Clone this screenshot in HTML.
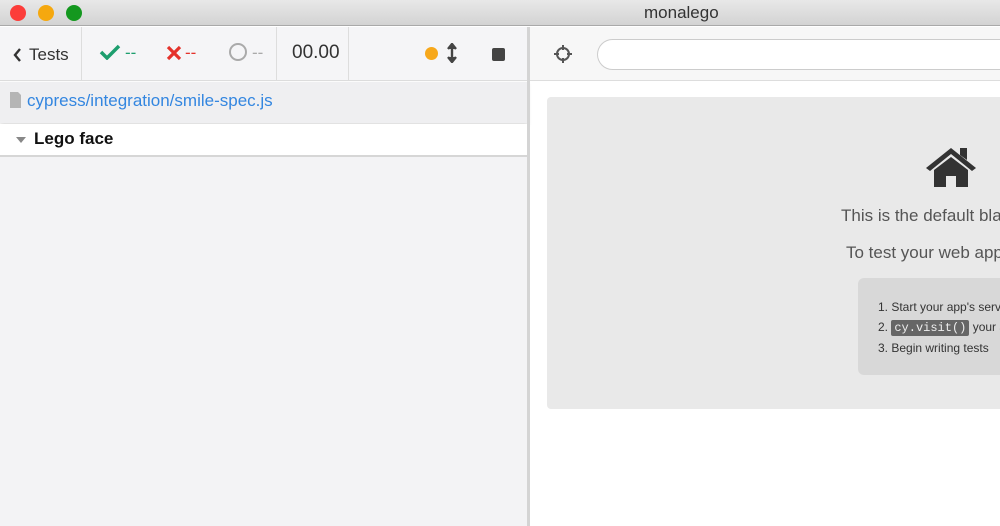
<!DOCTYPE html>
<html><head><meta charset="utf-8"><style>
*{margin:0;padding:0;box-sizing:border-box}
html,body{width:1000px;height:526px;overflow:hidden}
body{font-family:"Liberation Sans",sans-serif;background:#fff}
#w{position:relative;width:1000px;height:526px;overflow:hidden}
.abs{position:absolute}
</style></head><body><div id="w">
<div class="abs" style="left:0;top:0;width:1000px;height:26px;background:linear-gradient(#e8e8e8,#d3d3d3);border-bottom:1px solid #a9a9a9"></div>
<div class="abs" style="left:10px;top:5px;width:16px;height:16px;border-radius:50%;background:#fc3d3a"></div>
<div class="abs" style="left:38px;top:5px;width:16px;height:16px;border-radius:50%;background:#f5a80f"></div>
<div class="abs" style="left:66px;top:5px;width:16px;height:16px;border-radius:50%;background:#14981f"></div>
<div class="abs" style="left:644px;top:3px;font-size:17px;color:#333">monalego</div>

<div class="abs" style="left:0;top:27px;width:528px;height:54px;background:#f5f5f7;border-bottom:1px solid #ddd"></div>
<div class="abs" style="left:81px;top:27px;width:1px;height:54px;background:#ddd"></div>
<div class="abs" style="left:276px;top:27px;width:1px;height:54px;background:#ddd"></div>
<div class="abs" style="left:348px;top:27px;width:1px;height:54px;background:#ddd"></div>
<svg class="abs" style="left:12px;top:47px" width="10" height="16"><path d="M8 2 L3 8 L8 14" stroke="#333" stroke-width="2.4" fill="none"/></svg>
<div class="abs" style="left:29px;top:45px;font-size:17px;color:#333">Tests</div>
<svg class="abs" style="left:99px;top:44px" width="22" height="16"><path d="M2 8 L8 14 L20 2" stroke="#1d9e6e" stroke-width="3.5" fill="none"/></svg>
<div class="abs" style="left:125px;top:43px;font-size:17px;color:#1d9e6e">--</div>
<svg class="abs" style="left:166px;top:45px" width="16" height="16"><path d="M2 2L14 14M14 2L2 14" stroke="#e4322b" stroke-width="3.2"/></svg>
<div class="abs" style="left:185px;top:43px;font-size:17px;color:#e4322b">--</div>
<div class="abs" style="left:229px;top:43px;width:18px;height:18px;border-radius:50%;border:2.5px solid #aaa"></div>
<div class="abs" style="left:252px;top:43px;font-size:17px;color:#aaa">--</div>
<div class="abs" style="left:292px;top:42px;font-size:19px;color:#333">00.00</div>
<div class="abs" style="left:425px;top:47px;width:13px;height:13px;border-radius:50%;background:#f7a81b"></div>
<svg class="abs" style="left:446px;top:43px" width="12" height="20"><path d="M6 2V18M2 6L6 1L10 6M2 14L6 19L10 14" stroke="#444" stroke-width="2.4" fill="#444"/></svg>
<div class="abs" style="left:492px;top:48px;width:13px;height:13px;border-radius:2px;background:#444"></div>

<div class="abs" style="left:0;top:82px;width:528px;height:41px;background:#efeff1;box-shadow:0 2px 4px rgba(0,0,0,.15)"></div>
<svg class="abs" style="left:10px;top:92px" width="12" height="16"><path d="M0 0H8L11 3V16H0Z" fill="#b5b5b5"/></svg>
<div class="abs" style="left:27px;top:91px;font-size:17px;color:#3386e0">cypress/integration/smile-spec.js</div>
<div class="abs" style="left:0;top:124px;width:528px;height:33px;background:#fff;border-bottom:2px solid #d6d6d6"></div>
<div class="abs" style="left:16px;top:137px;width:0;height:0;border-left:5px solid transparent;border-right:5px solid transparent;border-top:6px solid #888"></div>
<div class="abs" style="left:34px;top:129px;font-size:17px;color:#111;font-weight:bold">Lego face</div>
<div class="abs" style="left:0;top:157px;width:528px;height:369px;background:#f3f3f5"></div>
<div class="abs" style="left:527px;top:27px;width:3px;height:499px;background:#d4d4d4"></div>

<div class="abs" style="left:530px;top:27px;width:470px;height:54px;background:#f7f7f7;border-bottom:1px solid #ddd"></div>
<svg class="abs" style="left:553px;top:44px" width="20" height="20"><circle cx="10" cy="10" r="6" stroke="#555" stroke-width="2" fill="none"/><path d="M10 1V6M10 14V19M1 10H6M14 10H19" stroke="#555" stroke-width="2"/></svg>
<div class="abs" style="left:597px;top:39px;width:403px;height:31px;border-radius:16px 0 0 16px;border:1.5px solid #ccc;border-right:none;background:#fff"></div>
<div class="abs" style="left:547px;top:97px;width:453px;height:312px;background:#e9e9e9;border-radius:4px 0 0 4px;overflow:hidden">
<svg class="abs" style="left:378px;top:49px" width="52" height="42"><path d="M1 22L26 2L51 22L47 25L26 8L5 25Z" fill="#333"/><path d="M35 2H42V14L35 9Z" fill="#333"/><path d="M9 24L26 11L43 24V41H31V30H21V41H9Z" fill="#333"/></svg>
<div class="abs" style="left:294px;top:109px;font-size:17px;color:#555;white-space:nowrap">This is the default blank page.</div>
<div class="abs" style="left:299px;top:146px;font-size:17px;color:#555;white-space:nowrap">To test your web application:</div>
<div class="abs" style="left:311px;top:181px;width:160px;height:97px;background:#d8d8d8;border-radius:6px"></div>
<div class="abs" style="left:331px;top:200px;font-size:12px;color:#333;line-height:20px;white-space:nowrap">1. Start your app's server<br>2. <span style="background:#666;color:#eee;font-family:'Liberation Mono',monospace;padding:1px 3px;border-radius:2px">cy.visit()</span> your app<br>3. Begin writing tests</div>
</div>
</div></body></html>
